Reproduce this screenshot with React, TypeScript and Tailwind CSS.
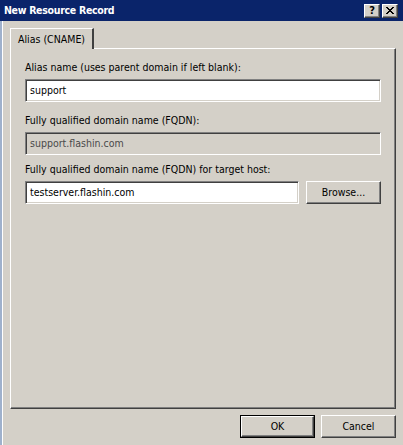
import React from "react";

const sunken =
  "border-t border-l border-b border-r border-t-[#808080] border-l-[#808080] border-b-white border-r-white shadow-[inset_1px_1px_0_#404040,inset_-1px_-1px_0_#d4d0c8]";
const raised =
  "border border-t-white border-l-white border-b-[#404040] border-r-[#404040] shadow-[inset_-1px_-1px_0_#808080]";

function Field({ value, disabled, className = "" }: { value: string; disabled?: boolean; className?: string }) {
  return (
    <div
      className={`h-[23px] flex items-center pl-[4px] ${sunken} ${disabled ? "bg-[#d4d0c8] text-[#4a4a4a]" : "bg-white text-black"} ${className}`}
    >
      {value}
    </div>
  );
}

export default function App() {
  return (
    <div className="w-[403px] h-[445px] bg-[#d4d0c8] flex flex-col overflow-hidden text-[10.5px] text-black font-['DejaVu_Sans_Condensed','Liberation_Sans',sans-serif] leading-[13px]">
      <div className="h-[21px] shrink-0 bg-[#0a246a] flex items-center pl-[4px] pr-[5px]">
        <span className="text-white font-bold text-[10.5px] tracking-[-0.3px]">New Resource Record</span>
        <div className="ml-auto flex gap-[2px]">
          <div className={`w-[16px] h-[14px] bg-[#d4d0c8] flex items-center justify-center font-bold text-[11px] leading-none ${raised}`}>?</div>
          <div className={`w-[16px] h-[14px] bg-[#d4d0c8] flex items-center justify-center ${raised}`}>
            <svg width="8" height="7" viewBox="0 0 8 7">
              <path d="M0 0h2v1h1v1h2v-1h1v-1h2v1h-1v1h-1v1h-1v1h1v1h1v1h1v1h-2v-1h-1v-1h-2v1h-1v1h-2v-1h1v-1h1v-1h1v-1h-1v-1h-1v-1h-1z" fill="#000" />
            </svg>
          </div>
        </div>
      </div>
      <div className="flex-1 flex border-l-2 border-l-[#9fb1cc]">
        <div className="flex-1 flex flex-col border-l border-l-white pl-[7px] pr-[7px] pt-[6px]">
          <div className="flex h-[21px] items-end">
            <div className="h-[21px] px-[7px] border-t border-l border-t-white border-l-white border-r-2 border-r-[#404040] flex items-center bg-[#d4d0c8] relative top-[1px] z-10">
              Alias (CNAME)
            </div>
          </div>
          <div className="h-[361px] border border-t-white border-l-white border-b-[#404040] border-r-[#404040] shadow-[inset_-1px_-1px_0_#808080] px-[14px] pt-[12px] flex flex-col">
            <div>Alias name (uses parent domain if left blank):</div>
            <Field value="support" className="mt-[5px]" />
            <div className="mt-[12px]">Fully qualified domain name (FQDN):</div>
            <Field value="support.flashin.com" disabled className="mt-[5px]" />
            <div className="mt-[8px]">Fully qualified domain name (FQDN) for target host:</div>
            <div className="flex gap-[7px] mt-[5px]">
              <Field value="testserver.flashin.com" className="flex-1" />
              <div className={`w-[75px] h-[23px] bg-[#d4d0c8] flex items-center justify-center ${raised}`}>Browse...</div>
            </div>
          </div>
          <div className="flex justify-end gap-[6px] mt-[6px]">
            <div className="w-[75px] h-[23px] border border-black">
              <div className={`w-full h-full bg-[#d4d0c8] flex items-center justify-center ${raised}`}>OK</div>
            </div>
            <div className={`w-[75px] h-[23px] bg-[#d4d0c8] flex items-center justify-center ${raised}`}>Cancel</div>
          </div>
        </div>
      </div>
    </div>
  );
}
